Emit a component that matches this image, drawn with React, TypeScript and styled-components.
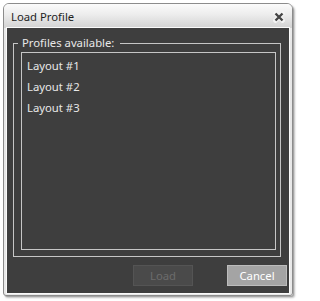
import React from "react";
import styled, { createGlobalStyle } from "styled-components";

const Global = createGlobalStyle`
  html, body { margin: 0; padding: 0; background: #ffffff; }
  body { font-family: "Noto Sans", "Open Sans", sans-serif; }
  * { box-sizing: border-box; }
`;

const Page = styled.div`
  width: 301px;
  height: 301px;
  padding: 3px 0 0 3px;
`;

const Window = styled.div`
  width: 290px;
  height: 293px;
  display: flex;
  flex-direction: column;
  border: 1px solid #8c8c8c;
  border-radius: 6px 6px 3px 3px;
  background: linear-gradient(#f4f4f4, #e6e6e6 40px, #e9e9e9);
  box-shadow: 2px 2px 2px rgba(0, 0, 0, 0.25), 1px 1px 0 rgba(0, 0, 0, 0.15);
  padding: 0 3px 2px 3px;
`;

const TitleBar = styled.div`
  height: 24px;
  flex: 0 0 24px;
  display: flex;
  align-items: center;
  justify-content: space-between;
  margin: 0 -3px;
  padding: 0 7px 0 7px;
  background: linear-gradient(#fbfbfb, #ececec 45%, #d2d2d2);
  border-radius: 5px 5px 0 0;
`;

const Title = styled.span`
  font-size: 11.3px;
  color: #1e1e1e;
  line-height: 16px;
  padding-top: 1px;
`;

const CloseButton = styled.div`
  width: 12px;
  height: 12px;
  display: flex;
  margin-top: 1px;
`;

const Client = styled.div`
  flex: 1;
  display: flex;
  flex-direction: column;
  background: #3e3e3e;
  outline: 1px solid #fafafa;
  padding: 7px 0 7px 0;
  color: #e4e4e4;
  font-size: 11.3px;
`;

const Group = styled.fieldset`
  margin: 0 8px 0 6px;
  padding: 0 4px 6px 7px;
  border: 1px solid #c6c6c6;
  flex: 1;
  display: flex;
  flex-direction: column;
  min-width: 0;
`;

const Legend = styled.legend`
  margin-left: -3px;
  padding: 0 6px 0 4px;
  line-height: 16px;
  font-size: 11.3px;
  color: #e8e8e8;
`;

const List = styled.div`
  flex: 1;
  margin-top: 1px;
  border: 1px solid #c6c6c6;
  padding: 2px 0 0 5px;
  display: flex;
  flex-direction: column;
`;

const Item = styled.div`
  height: 21px;
  line-height: 21px;
  font-size: 11.3px;
  color: #e8e8e8;
`;

const Buttons = styled.div`
  display: flex;
  justify-content: flex-end;
  gap: 34px;
  margin-top: 8px;
  padding-right: 2px;
`;

const Button = styled.div<{ $disabled?: boolean }>`
  width: 60px;
  height: 21px;
  display: flex;
  align-items: center;
  justify-content: center;
  font-size: 11.3px;
  color: ${(p) => (p.$disabled ? "#6c6c6c" : "#ffffff")};
  background: ${(p) => (p.$disabled ? "#4a4a4a" : "#a4a4a4")};
  border: 1px solid ${(p) => (p.$disabled ? "#545454" : "#bcbcbc")};
`;

const CloseIcon = () => (
  <svg width="12" height="12" viewBox="0 0 12 12">
    <path d="M2.5 2.5 L9.5 9.5 M9.5 2.5 L2.5 9.5" stroke="#f4f4f4" strokeWidth="4.5" strokeLinecap="square" />
    <path d="M2.5 2.5 L9.5 9.5 M9.5 2.5 L2.5 9.5" stroke="#454545" strokeWidth="2.4" strokeLinecap="butt" />
  </svg>
);

export default function App() {
  return (
    <>
      <Global />
      <Page>
        <Window>
          <TitleBar>
            <Title>Load Profile</Title>
            <CloseButton>
              <CloseIcon />
            </CloseButton>
          </TitleBar>
          <Client>
            <Group>
              <Legend>Profiles available:</Legend>
              <List>
                <Item>Layout #1</Item>
                <Item>Layout #2</Item>
                <Item>Layout #3</Item>
              </List>
            </Group>
            <Buttons>
              <Button $disabled>Load</Button>
              <Button>Cancel</Button>
            </Buttons>
          </Client>
        </Window>
      </Page>
    </>
  );
}
